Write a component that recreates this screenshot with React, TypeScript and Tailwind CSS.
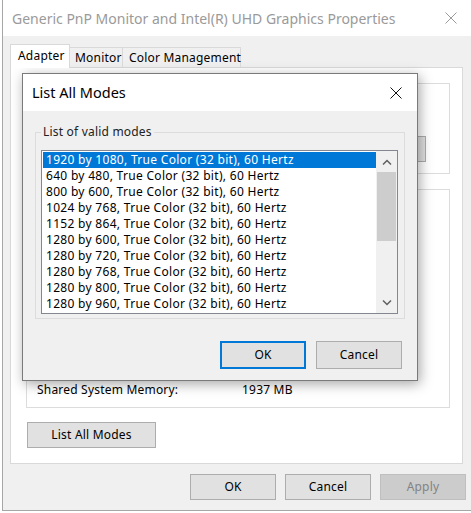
import React from "react";

const modes = [
  "1920 by 1080, True Color (32 bit), 60 Hertz",
  "640 by 480, True Color (32 bit), 60 Hertz",
  "800 by 600, True Color (32 bit), 60 Hertz",
  "1024 by 768, True Color (32 bit), 60 Hertz",
  "1152 by 864, True Color (32 bit), 60 Hertz",
  "1280 by 600, True Color (32 bit), 60 Hertz",
  "1280 by 720, True Color (32 bit), 60 Hertz",
  "1280 by 768, True Color (32 bit), 60 Hertz",
  "1280 by 800, True Color (32 bit), 60 Hertz",
  "1280 by 960, True Color (32 bit), 60 Hertz",
];

function CloseX({ color }: { color: string }) {
  return (
    <svg width="12" height="12" viewBox="0 0 12 12">
      <path d="M0.5 0.5 L11.5 11.5 M11.5 0.5 L0.5 11.5" stroke={color} strokeWidth="1" />
    </svg>
  );
}

function Btn({ children, className = "" }: { children?: React.ReactNode; className?: string }) {
  return (
    <div
      className={
        "flex items-center justify-center bg-[#e1e1e1] border border-[#adadad] text-[12px] tracking-[0.2px] text-black " +
        className
      }
    >
      {children}
    </div>
  );
}

export default function App() {
  return (
    <div className="w-[471px] h-[513px] bg-white relative overflow-hidden font-['Noto_Sans',sans-serif] text-black">
      {/* Main window */}
      <div className="ml-[2px] w-[480px] h-[511px] border-l border-b border-[#a6a6a6] flex flex-col bg-[#f0f0f0]">
        <div className="h-[36px] bg-white flex items-center justify-between pl-[9px] pr-[25px]">
          <span className="text-[14px] text-[#9a9a9a]">
            Generic PnP Monitor and Intel(R) UHD Graphics Properties
          </span>
          <CloseX color="#9a9a9a" />
        </div>
        <div className="pl-[7px] pt-[8px] flex flex-col">
          {/* Tabs */}
          <div className="flex items-end h-[23px] relative z-10 text-[12px] tracking-[0.2px] whitespace-nowrap">
            <div className="h-[24px] -mb-[1px] bg-white border border-b-0 border-[#d9d9d9] px-[7px] pt-[2px] w-[60px]">
              Adapter
            </div>
            <div className="h-[20px] border border-l-0 border-b-0 border-[#d9d9d9] px-[5px] w-[53px] leading-[19px]">
              Monitor
            </div>
            <div className="h-[20px] border border-l-0 border-b-0 border-[#d9d9d9] px-[6px] w-[118px] leading-[19px]">
              Color Management
            </div>
          </div>
          {/* Panel */}
          <div className="w-[453px] h-[397px] bg-white border border-[#d9d9d9] pt-[15px] pl-[15px] flex flex-col">
            <div className="w-[424px] h-[91px] border border-[#dcdcdc] flex justify-end items-end pb-[11px] pr-[23px]">
              <Btn className="w-[66px] h-[26px]" />
            </div>
            <div className="mt-[15px] w-[424px] h-[219px] border border-[#dcdcdc] flex flex-col justify-end pb-[8px] pl-[10px] text-[12px] tracking-[0.2px]">
              <div className="flex">
                <span className="w-[205px]">Shared System Memory:</span>
                <span>1937 MB</span>
              </div>
            </div>
            <Btn className="mt-[14px] ml-[1px] w-[129px] h-[26px]">List All Modes</Btn>
          </div>
          {/* bottom buttons */}
          <div className="flex mt-[10px] ml-[180px] gap-[9px]">
            <Btn className="w-[86px] h-[26px]">OK</Btn>
            <Btn className="w-[86px] h-[26px]">Cancel</Btn>
            <div className="w-[86px] h-[26px] flex items-center justify-center bg-[#cccccc] border border-[#bfbfbf] text-[12px] tracking-[0.2px] text-[#838383]">
              Apply
            </div>
          </div>
        </div>
      </div>

      {/* Dialog overlay */}
      <div className="absolute left-[22px] top-[73px] w-[396px] h-[308px] bg-[#f0f0f0] border border-[#7a7a7a] shadow-[2px_3px_12px_rgba(0,0,0,0.35)] flex flex-col">
        <div className="h-[37px] bg-white flex items-center justify-between pl-[9px] pr-[15px]">
          <span className="text-[14.5px] text-black">List All Modes</span>
          <CloseX color="#111" />
        </div>
        <div className="pl-[12px] pt-[21px] flex flex-col">
          <div className="relative w-[370px] h-[187px] border border-[#dcdcdc] pt-[17px] pl-[5px]">
            <span className="absolute left-[5px] -top-[10px] bg-[#f0f0f0] px-[2px] text-[12px] tracking-[0.2px] text-[#222]">
              List of valid modes
            </span>
            <div className="w-[357px] h-[164px] bg-white border border-[#828790] flex">
              <div className="flex-1 pl-[1px] pt-[1px] flex flex-col">
                {modes.map((m, i) => (
                  <div
                    key={m}
                    className={
                      "h-[16px] leading-[16px] text-[12px] tracking-[0.3px] pl-[3px] whitespace-nowrap " +
                      (i === 0 ? "bg-[#0078d7] text-white" : "text-black")
                    }
                  >
                    {m}
                  </div>
                ))}
              </div>
              <div className="w-[21px] bg-[#f0f0f0] flex flex-col items-center">
                <div className="h-[21px] w-full flex items-center justify-center">
                  <svg width="10" height="6" viewBox="0 0 10 6">
                    <path d="M1 5.5 L5 1.5 L9 5.5" stroke="#606060" strokeWidth="1.5" fill="none" />
                  </svg>
                </div>
                <div className="w-[19px] h-[69px] bg-[#cdcdcd]" />
                <div className="flex-1" />
                <div className="h-[21px] w-full flex items-center justify-center">
                  <svg width="10" height="6" viewBox="0 0 10 6">
                    <path d="M1 0.5 L5 4.5 L9 0.5" stroke="#606060" strokeWidth="1.5" fill="none" />
                  </svg>
                </div>
              </div>
            </div>
          </div>
          <div className="flex justify-end gap-[10px] mt-[22px] pr-[15px]">
            <div className="w-[86px] h-[28px] flex items-center justify-center bg-[#e1e1e1] border-2 border-[#0078d7] text-[12px] tracking-[0.2px]">
              OK
            </div>
            <Btn className="w-[86px] h-[28px]">Cancel</Btn>
          </div>
        </div>
      </div>
    </div>
  );
}
